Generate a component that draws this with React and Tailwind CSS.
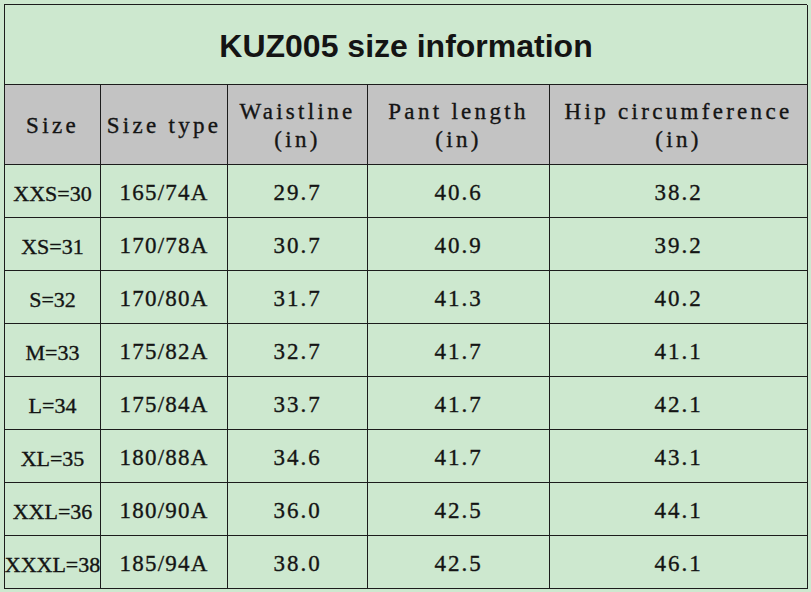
import React from "react";

const rows = [
  ["XXS=30", "165/74A", "29.7", "40.6", "38.2"],
  ["XS=31", "170/78A", "30.7", "40.9", "39.2"],
  ["S=32", "170/80A", "31.7", "41.3", "40.2"],
  ["M=33", "175/82A", "32.7", "41.7", "41.1"],
  ["L=34", "175/84A", "33.7", "41.7", "42.1"],
  ["XL=35", "180/88A", "34.6", "41.7", "43.1"],
  ["XXL=36", "180/90A", "36.0", "42.5", "44.1"],
  ["XXXL=38", "185/94A", "38.0", "42.5", "46.1"],
];

const headers = [
  ["Size"],
  ["Size type"],
  ["Waistline", "(in)"],
  ["Pant length", "(in)"],
  ["Hip circumference", "(in)"],
];

const serif = "font-['Liberation_Serif','Times_New_Roman',serif] [-webkit-text-stroke:0.35px_#141414]";

export default function App() {
  return (
    <div className="w-[811px] h-[592px] bg-[#cde8cf] pt-[4px] pl-[4px] overflow-hidden">
      <div className="grid grid-cols-[96px_127px_140px_182px_258px] grid-rows-[80px_80px_repeat(8,53px)] border-l border-t border-[#1c1c1c] w-[803px] text-[#141414]">
        <div className="col-span-5 flex items-center justify-center border-r border-b border-[#1c1c1c] font-['Liberation_Sans',Arial,sans-serif] font-bold text-[32px] pt-[2px]">
          KUZ005 size information
        </div>
        {headers.map((h, i) => (
          <div
            key={i}
            className={`bg-[#c3c3c3] border-r border-b border-[#1c1c1c] flex flex-col items-center justify-center pt-[3px] text-[23px] leading-[28px] tracking-[3.3px] ${serif} whitespace-nowrap`}
          >
            {h.map((l, j) => (
              <span key={j}>{l}</span>
            ))}
          </div>
        ))}
        {rows.map((r, ri) =>
          r.map((c, ci) => (
            <div
              key={ri + "-" + ci}
              className={`border-r border-b border-[#1c1c1c] flex items-center justify-center pt-[4px] ${serif} whitespace-nowrap ${
                ci === 0 ? "text-[22px] tracking-[0px]" : ci === 1 ? "text-[23px] tracking-[1.2px]" : "text-[23px] tracking-[2px]"
              }`}
            >
              {c}
            </div>
          ))
        )}
      </div>
    </div>
  );
}
